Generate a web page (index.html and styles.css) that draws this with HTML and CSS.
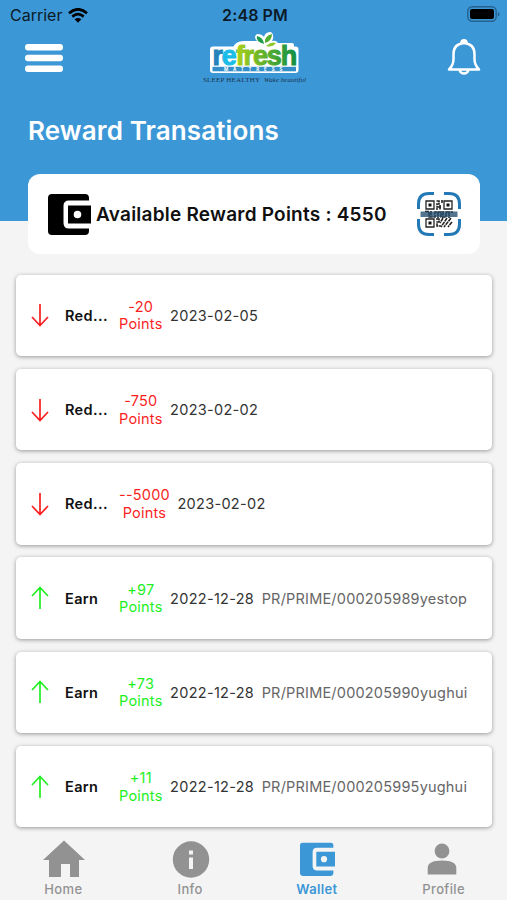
FILE: index.html
```html
<!DOCTYPE html>
<html lang="en">
<head>
<meta charset="utf-8">
<title>Reward Transations</title>
<link rel="stylesheet" href="styles.css">
</head>
<body>
<svg class="defs" aria-hidden="true">
  <linearGradient id="brand"><stop offset="0" stop-color="#2582bb"/><stop offset=".11" stop-color="#2582bb"/><stop offset=".13" stop-color="#1bbce8"/><stop offset=".28" stop-color="#1bbce8"/><stop offset=".3" stop-color="#a8ce1c"/><stop offset=".6" stop-color="#65b32a"/><stop offset="1" stop-color="#109045"/></linearGradient>
  <symbol id="wallet" viewBox="0 0 43 41">
    <path fill-rule="evenodd" d="M4 0H37Q41 0 41 4V6.500H21Q15.500 6.500 15.500 12V29Q15.500 34.500 21 34.500H41V37Q41 41 37 41H4Q0 41 0 37V4Q0 0 4 0ZM20 11.500H43V29.500H20ZM29.500 16.700A3.800 3.800 0 1 0 29.500 24.300A3.800 3.800 0 1 0 29.500 16.700Z"/>
  </symbol>
  <symbol id="down" viewBox="0 0 18 24"><path d="M9 1V22M1 14L9 22.500L17 14"/></symbol>
  <symbol id="up" viewBox="0 0 18 24"><path d="M9 23V2M1 10L9 1.500L17 10"/></symbol>
</svg>
<div class="app">
  <header class="hero">
    <div class="status">
      <div class="carrier"><span>Carrier</span>
        <svg width="20" height="15" viewBox="0 0 20 15" fill="none" stroke="#000" stroke-width="2.700"><path d="M1 5.200Q10-2.600 19 5.200M4.300 8.600Q10 3.800 15.700 8.600"/><path d="M6.600 11.300Q10 8.700 13.400 11.300L10 14.800Z" fill="#000" stroke="none"/></svg>
      </div>
      <div class="time">2:48 PM</div>
      <svg class="battery" width="33" height="17" viewBox="0 0 33 17"><rect x=".8" y=".8" width="28.400" height="14.400" rx="4.500" fill="none" stroke="#25618c" stroke-width="1.400"/><rect x="3" y="3" width="24" height="10" rx="2" fill="#000"/><path d="M30.800 6V10.500Q32.500 10 32.500 8.250T30.800 6" fill="#25618c"/></svg>
    </div>
    <div class="bar">
      <svg width="38" height="28" viewBox="0 0 38 28" fill="#fff"><rect width="38" height="6.400" rx="3"/><rect y="10.800" width="38" height="6.400" rx="3"/><rect y="21.600" width="38" height="6.400" rx="3"/></svg>
      <svg class="logo" width="110" height="56" viewBox="0 0 110 56">
        <rect x="7" y="16.500" width="88.500" height="26.500" rx="3" fill="#fff"/>
        <path d="M30 18Q32 11 41 11H46V18ZM74 13H89Q91 13 91 15V18H74Z" fill="#fff"/>
        <path d="M43 18V11H54Q50 7 54 4Q59 4 61 7Q62 2 68 2Q72 5 69 11Q75 10 75 15L73 18Z" fill="#fff"/>
        <path d="M61 14Q52 11 54 6Q60 7 61 14Z" fill="#1f9d4b"/><path d="M62 13Q61 6 69 4Q69 11 62 13Z" fill="#53ae32"/><path d="M63 16Q68 11 73 13Q69 18 63 16Z" fill="#8fc72a"/>
        <text class="word" x="9.500" y="34.500" fill="url(#brand)" stroke="url(#brand)">refresh</text>
        <rect x="9.500" y="36.800" width="83.500" height="4.500" fill="#348fc8"/>
        <text class="mattress" x="21" y="40.600">MATTRESS</text>
        <text class="tag" x="0" y="52" textLength="57">SLEEP HEALTHY</text><text class="tag italic" x="61" y="52" textLength="42">Wake beautiful</text>
      </svg>
      <svg class="bell" width="34" height="36" viewBox="0 0 34 36" fill="none" stroke="#fff" stroke-width="2.500" stroke-linejoin="round"><path d="M2 30.500Q6.500 26 6.500 20V15Q6.500 5 17 4Q27.500 5 27.500 15V20Q27.500 26 32 30.500Z"/><path d="M12.500 31Q13.500 34.500 17 34.500T21.500 31"/><path d="M14.500 3.800Q14.500 1.200 17 1.200T19.500 3.800Z" fill="#fff"/></svg>
    </div>
    <h1>Reward Transations</h1>
  </header>
  <section class="balance">
    <svg class="ink" width="43" height="41"><use href="#wallet"/></svg>
    <strong>Available Reward Points : 4550</strong>
    <svg class="qr" width="44" height="44" viewBox="0 0 44 44">
      <path d="M17 1.500H12Q1.500 1.500 1.500 12V17M27 1.500H32Q42.500 1.500 42.500 12V17M1.500 27V32Q1.500 42.500 12 42.500H17M27 42.500H32Q42.500 42.500 42.500 32V27" fill="none" stroke="#2379b5" stroke-width="3"/>
      <g fill="none" stroke="#222" stroke-width="1.300"><path d="M9 9H17V17H9ZM27 9H35V17H27ZM9 27H17V35H9Z"/><path d="M19.500 9H22V12H20V15H24M25 8V11M23 13V18M19 17H21M19 27H22V30H20V34H24M26 26L23 31M30 26L24 35M34 26L27 35M35 30L31 35M8 19.500H12V25H18V20H24V25H29V20H36M14 19V24M21 20V26M26 19V24M32 20V26" stroke-width="1.600" stroke-dasharray="4 .6"/></g>
      <path d="M11.500 11.500H14.500V14.500H11.500ZM29.500 11.500H32.500V14.500H29.500ZM11.500 29.500H14.500V32.500H11.500Z" fill="#111"/>
      <path d="M3.500 19.500H40.500V25H3.500Z" fill="#23506e" opacity=".78"/>
    </svg>
  </section>
  <main class="list">
    <article class="card spend"><svg class="arrow"><use href="#down"/></svg><b>Red...</b><span class="points">-20<br>Points</span><time>2023-02-05</time></article>
    <article class="card spend"><svg class="arrow"><use href="#down"/></svg><b>Red...</b><span class="points">-750<br>Points</span><time>2023-02-02</time></article>
    <article class="card spend"><svg class="arrow"><use href="#down"/></svg><b>Red...</b><span class="points">--5000<br>Points</span><time>2023-02-02</time></article>
    <article class="card earn"><svg class="arrow"><use href="#up"/></svg><b>Earn</b><span class="points">+97<br>Points</span><time>2022-12-28</time><span class="ref">PR/PRIME/000205989yestop</span></article>
    <article class="card earn"><svg class="arrow"><use href="#up"/></svg><b>Earn</b><span class="points">+73<br>Points</span><time>2022-12-28</time><span class="ref">PR/PRIME/000205990yughui</span></article>
    <article class="card earn"><svg class="arrow"><use href="#up"/></svg><b>Earn</b><span class="points">+11<br>Points</span><time>2022-12-28</time><span class="ref">PR/PRIME/000205995yughui</span></article>
  </main>
  <nav class="tabs">
    <a><svg width="42" height="38" viewBox="0 0 42 38"><path d="M21 .5L42 20H36V37H27V24H18V37H6V20H0Z"/></svg><span>Home</span></a>
    <a><svg width="38" height="38" viewBox="0 0 38 38"><circle cx="19" cy="19.500" r="18.200"/><path d="M17 10.500H21V14.500H17ZM17 17.500H21V29H17Z" fill="#f4f4f4"/></svg><span>Info</span></a>
    <a class="active"><svg width="35" height="38" viewBox="0 0 35 38"><use href="#wallet" y="2.500" width="35" height="33.400"/></svg><span>Wallet</span></a>
    <a><svg width="34" height="38" viewBox="0 0 34 38"><circle cx="15" cy="11" r="7.400"/><path d="M.7 34.500V28Q.7 20.500 15 20.500T29.300 28V34.500Z"/></svg><span>Profile</span></a>
  </nav>
</div>
</body>
</html>
```
FILE: styles.css
```css
* { box-sizing: border-box; }
body { margin: 0; background: #f4f4f4; font-family: Inter, "Liberation Sans", sans-serif; }
svg { display: block; flex: none; }
.defs { width: 0; height: 0; position: absolute; }
.app { width: 507px; height: 900px; overflow: hidden; display: flex; flex-direction: column; }
.hero { height: 221px; flex: none; background: #3c97d7; }
.status { height: 30px; display: grid; grid-template-columns: 1fr auto 1fr; align-items: center; padding: 0 7px 0 10px; color: #0b1b27; }
.carrier { display: flex; align-items: center; gap: 6px; font-size: 16px; letter-spacing: 0; }
.time { font-size: 16px; font-weight: 600; letter-spacing: .1px; }
.battery { justify-self: end; margin-top: -2px; }
.bar { height: 60px; display: flex; justify-content: space-between; padding: 0 26px 0 25px; }
.bar > svg:first-child { margin-top: 14px; }
.logo { margin: 0 0 0 6px; }
.bell { margin-top: 9px; }
.word { font: bold 27px "Liberation Sans", sans-serif; letter-spacing: -1.150px; stroke-width: 1px; }
.mattress { font: 700 4.500px Inter, sans-serif; letter-spacing: 4.800px; fill: #fff; }
.tag { font: 7px "Liberation Serif", serif; fill: #173650; }
.italic { font-style: italic; }
h1 { margin: 25px 0 0 28px; font-size: 26px; line-height: 32px; font-weight: 600; letter-spacing: .12px; color: #fff; }
.balance { height: 80px; flex: none; margin: -47px 27px 0 28px; padding: 0 19px 0 20px; border-radius: 12px; background: #fff; display: flex; align-items: center; }
.balance strong { margin-left: 5px; font-size: 19px; font-weight: 600; letter-spacing: .23px; white-space: nowrap; color: #101010; }
.qr { margin-left: auto; }
.list { display: flex; flex-direction: column; gap: 12.800px; padding: 20.500px 15px 0 16px; flex: none; }
.card { height: 81.500px; border-radius: 5px; background: #fff; box-shadow: 0 1px 4px rgba(0,0,0,.38); display: flex; align-items: center; padding: 0 0 0 15px; font-size: 14.500px; white-space: nowrap; }
.arrow { width: 18px; height: 24px; fill: none; stroke: currentColor; stroke-width: 1.700; }
.spend { color: #f91f1f; }
.earn { color: #22ef22; }
.card b { width: 54px; margin-left: 16px; font-weight: 600; letter-spacing: .35px; color: #111; }
.points { text-align: center; line-height: 17.500px; letter-spacing: .22px; }
.card time { margin-left: 7.500px; color: #333; letter-spacing: .3px; }
.ref { margin-left: 7.500px; color: #666; letter-spacing: .2px; }
.tabs { flex: 1; display: grid; grid-template-columns: repeat(4, 1fr); padding-top: 11.500px; }
.tabs a { display: flex; flex-direction: column; align-items: center; gap: 4.500px; font-size: 13px; line-height: 17px; letter-spacing: .35px; font-weight: 500; color: #929292; fill: #929292; }
.tabs svg { margin: 1px 0 -1px 1px; }
.tabs .active { color: #3c97d7; fill: #3c97d7; font-weight: 600; }
```
